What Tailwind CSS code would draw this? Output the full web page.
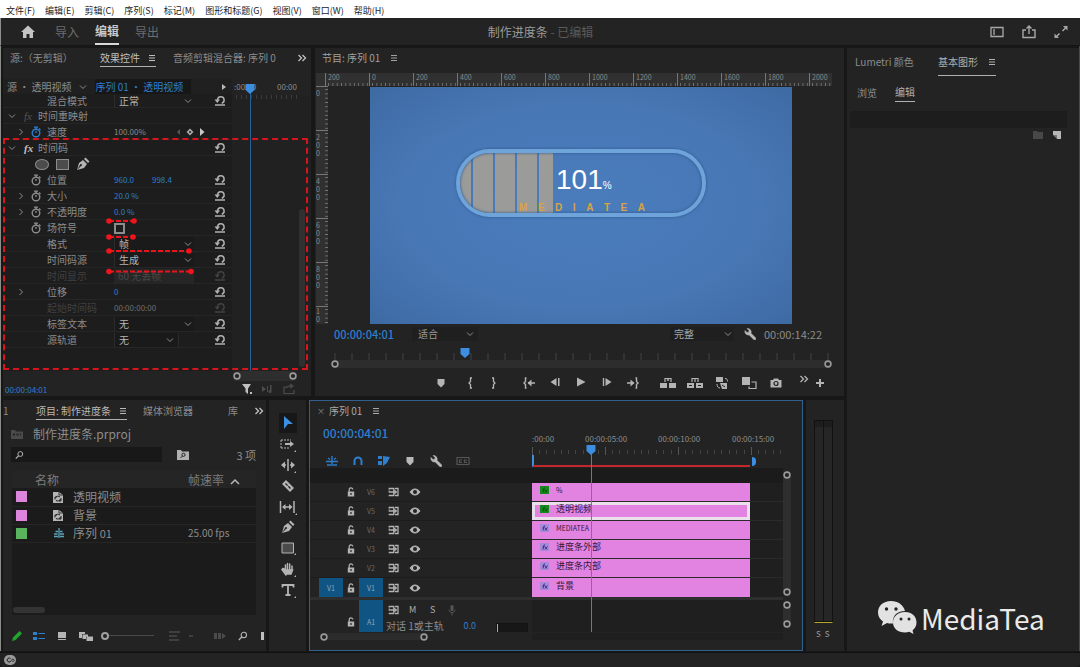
<!DOCTYPE html>
<html lang="zh-CN">
<head>
<meta charset="utf-8">
<meta name="viewport" content="width=device-width, initial-scale=1">
<title>制作进度条 - 已编辑</title>
<script src="https://cdn.jsdelivr.net/npm/@tailwindcss/browser@4"></script>
</head>
<body class="flex min-h-screen flex-col bg-[#171717] font-['Noto_Sans_CJK_SC','Noto_Sans',sans-serif] text-[10px] leading-4 text-[#8c8c8c]">

<!-- Icon library -->
<svg class="hidden" aria-hidden="true">
  <symbol id="i-menu" viewBox="0 0 8 8"><path d="M1 1.5h6M1 4h6M1 6.5h6" stroke="currentColor"/></symbol>
  <symbol id="i-more" viewBox="0 0 10 8"><path d="M1.5 1l3 3-3 3M5.500 1l3 3-3 3" fill="none" stroke="currentColor" stroke-width="1.300"/></symbol>
  <symbol id="i-down" viewBox="0 0 8 8"><path d="M1 2.500l3 3 3-3" fill="none" stroke="currentColor"/></symbol>
  <symbol id="i-right" viewBox="0 0 8 8"><path d="M2.500 1l3 3-3 3" fill="none" stroke="currentColor"/></symbol>
  <symbol id="i-watch" viewBox="0 0 12 12"><circle cx="6" cy="7" r="3.800" fill="none" stroke="currentColor" stroke-width="1.400"/><path d="M4 1.200h4M6 1v2M9 2.500l1.500 1.500M6 7V5" stroke="currentColor" stroke-width="1.300"/></symbol>
  <symbol id="i-reset" viewBox="0 0 12 12"><path d="M3.500 5.500V5a3.300 3.300 0 1 1 4.200 3.200M1 10h10" fill="none" stroke="currentColor" stroke-width="1.500"/><path d="M.500 4.500h5.500L3.200 8z" fill="currentColor"/></symbol>
  <symbol id="i-pen" viewBox="0 0 14 14"><path d="M1 13l2-7 4-3 4 4-3 4-7 2 4-4a1 1 0 1 0-1-1zM8 2l1.500-1.500 4 4L12 6z" fill="currentColor"/></symbol>
  <symbol id="i-wrench" viewBox="0 0 12 12"><path d="M1 2.500l2 2 1.700-.300.300-1.700-2-2a3.600 3.600 0 0 1 4 4.700l4.500 4.500a1 1 0 0 1-1.800 1.800L5.200 7A3.600 3.600 0 0 1 1 2.500z" fill="currentColor" stroke="currentColor" stroke-width=".500"/></symbol>
  <symbol id="i-shield" viewBox="0 0 10 10"><path d="M1.500 1h7v5L5 9.500 1.500 6z" fill="currentColor"/></symbol>
  <symbol id="i-find" viewBox="0 0 12 12"><circle cx="7" cy="4.700" r="3.200" fill="none" stroke="currentColor" stroke-width="1.300"/><path d="M4.700 7L1 10.800" stroke="currentColor" stroke-width="1.600"/></symbol>
  <symbol id="i-clip" viewBox="0 0 10 12"><path d="M0 1h6l4 3v8H0z" fill="currentColor"/><path d="M6 1v3h4" fill="none" stroke="#1b1b1b" stroke-width=".800"/><path d="M2.500 6.500A3 3 0 0 1 7 6M7.500 8a3 3 0 0 1-4.500 1.500M2 8.500V6h2M8 7v3H6" fill="none" stroke="#1b1b1b"/></symbol>
  <symbol id="i-lock" viewBox="0 0 8 10"><path d="M2.200 5V3a1.800 1.800 0 0 1 3.600-.500" fill="none" stroke="currentColor" stroke-width="1.200"/><path d="M.800 4.500h6.400v5H.800z" fill="currentColor"/><path d="M4 6v2" stroke="#232323" stroke-width="1.200"/></symbol>
  <symbol id="i-sync" viewBox="0 0 11 10"><path d="M.700 1.500H6M.700 8.500H6M.700 5H6M7 1.500h3v7H7M5.800 1v8" fill="none" stroke="currentColor" stroke-width="1.300"/><path d="M1.200 1v4M6.500 3l2.500 2-2.500 2z" fill="currentColor" stroke="currentColor" stroke-width=".600"/></symbol>
  <symbol id="i-eye" viewBox="0 0 12 10"><path d="M1 5c2.500-4 7.500-4 10 0-2.500 4-7.500 4-10 0z" fill="currentColor" stroke="currentColor"/><circle cx="6" cy="5" r="2" fill="#232323"/></symbol>
  <symbol id="i-knob" viewBox="0 0 8 8"><circle cx="4" cy="4" r="2.900" fill="#232323" stroke="#9a9a9a" stroke-width="1.600"/></symbol>
  <symbol id="i-nest" viewBox="0 0 12 12"><path d="M6 1v10M1 9.500h4M1 7h3.500M7 7h4M7 9.500h4M2.500 4.500H5M7 4.500h2.500" stroke="currentColor" stroke-width="1.300"/></symbol>
  <symbol id="i-head" viewBox="0 0 10 10"><path d="M.500 0h9v6L5 10 .500 6z" fill="#3b8ee0"/></symbol>
</svg>

<!-- Menu bar -->
<nav class="flex h-[18px] items-center gap-2.5 bg-white pl-1.5 pt-1 text-[9px] text-[#1c1c1c]">
  <button>文件(F)</button><button>编辑(E)</button><button>剪辑(C)</button><button>序列(S)</button><button>标记(M)</button><button>图形和标题(G)</button><button>视图(V)</button><button>窗口(W)</button><button>帮助(H)</button>
</nav>

<!-- Workspace header -->
<header class="grid h-7 shrink-0 grid-cols-3 items-center border-b border-l border-b-[#151515] border-l-[#8a8f8a] bg-[#232323] text-[12px]">
  <div class="flex h-full items-center gap-4 pl-5">
    <button aria-label="主页" class="text-[#c4c4c4]"><svg class="h-3.5 w-3.5" viewBox="0 0 14 14"><path d="M7 .500L14 7h-2v6H8.500V9h-3v4H2V7H0z" fill="currentColor"/></svg></button>
    <button class="ml-1 text-[#6e6e6e]">导入</button>
    <button class="h-full border-b-2 border-[#d8d8d8] font-bold text-[#c8c8c8]">编辑</button>
    <button class="text-[#6e6e6e]">导出</button>
  </div>
  <h1 class="text-center text-[#9a9a9a]">制作进度条 <span class="text-[#5a5a5a]">- 已编辑</span></h1>
  <div class="flex items-center justify-end gap-[18px] pr-3 text-[#a8a8a8]">
    <button aria-label="工作区"><svg class="h-3.5 w-3.5" viewBox="0 0 14 14"><path d="M1 2.500h12v9H1zM4 4v6" fill="none" stroke="currentColor" stroke-width="1.300"/></svg></button>
    <button aria-label="快速导出"><svg class="h-3.5 w-3.5" viewBox="0 0 14 14"><path d="M4 5H1v7.500h12V5h-3M7 9V1.500M4.500 3.500L7 1l2.500 2.500" fill="none" stroke="currentColor" stroke-width="1.400"/></svg></button>
    <button aria-label="全屏"><svg class="h-3.5 w-3.5" viewBox="0 0 14 14"><path d="M9 1h4.500v4.500zM.500 8.500V13H5z" fill="currentColor"/><path d="M12 2.500L8.500 6M2 12l3.500-3.500" stroke="currentColor" stroke-width="1.500"/></svg></button>
  </div>
</header>

<main class="flex flex-1 gap-[3px] border-l border-r border-l-[#8a8f8a] border-r-[#4a4a4a] pl-0.5 pt-0.5">
 <div class="flex min-w-0 flex-1 flex-col gap-1">
  <div class="flex gap-1">

  <!-- Effect controls -->
  <section class="relative flex w-[308px] shrink-0 flex-col bg-[#232323]">
    <div class="flex h-[31px] items-start gap-[17px] pl-[7px] pt-0.5">
      <button class="w-[73px] whitespace-nowrap text-left">源:（无剪辑）</button>
      <button class="flex h-[17px] items-center gap-2 whitespace-nowrap border-b border-[#b0b0b0] text-[#c0c0c0]">效果控件 <svg class="h-2 w-2"><use href="#i-menu"/></svg></button>
      <button class="whitespace-nowrap">音频剪辑混合器: 序列 0</button>
      <button aria-label="更多面板" class="ml-1 flex h-4 items-center text-[#c0c0c0]"><svg class="h-2 w-2.5"><use href="#i-more"/></svg></button>
    </div>
    <div class="flex">
      <div class="w-[229px] bg-[#1d1d1d] pb-[23px]">
        <div class="flex h-[15px] items-center gap-2 whitespace-nowrap bg-[#202020] pl-1">
          <span>源 · 透明视频</span><svg class="h-2 w-2"><use href="#i-down"/></svg>
          <a href="#seq" class="bg-[#171717] pr-2 leading-[15px] text-[#2d7fd0]">序列 01 · 透明视频</a>
          <svg class="ml-auto mr-1 h-2 w-2 text-[#b8b8b8]" viewBox="0 0 8 8"><path d="M2 1l4 3-4 3z" fill="currentColor"/></svg>
        </div>
        <div class="grid h-3.5 grid-cols-[44px_67px_1fr_24px] items-center border-b border-[#262626] leading-3">
          <label for="blend" class="col-start-2">混合模式</label>
          <span class="relative flex w-[80px] items-center border-l border-[#2c2c2c]"><select id="blend" class="h-3 w-full appearance-none bg-transparent pl-1 leading-3 text-[#b4b4b4]"><option>正常</option></select><svg class="pointer-events-none absolute right-0.5 h-2 w-2"><use href="#i-down"/></svg></span>
          <button aria-label="重置" class="justify-self-center text-[#b0b0b0]"><svg class="h-3 w-3"><use href="#i-reset"/></svg></button>
        </div>
        <div class="flex h-4 items-center border-b border-[#262626] pl-[5px]">
          <svg class="h-2 w-2"><use href="#i-down"/></svg><i class="ml-2 w-[14px] font-['Liberation_Serif',serif] text-[11px] text-[#555]">fx</i><span>时间重映射</span>
        </div>
        <div class="grid h-4 grid-cols-[27px_17px_67px_1fr_24px] items-center border-b border-[#262626]">
          <svg class="ml-3.5 h-2 w-2"><use href="#i-right"/></svg><svg class="h-3 w-3 text-[#2d7fd0]"><use href="#i-watch"/></svg><span>速度</span><span class="text-[8px]">100.00%</span>
          <svg class="-ml-8 h-2.5 w-8 text-[#a8a8a8]" viewBox="0 0 32 10"><path d="M4 2v6L1 5z" fill="#555"/><path d="M14 1.500L17.500 5 14 8.500 10.500 5z" fill="#a8a8a8"/><circle cx="14" cy="5" r="1" fill="#1d1d1d"/><path d="M24 1v8L28.500 5z" fill="#c8c8c8"/></svg>
        </div>
        <div class="flex h-4 items-center border-b border-[#262626] pl-[5px]">
          <svg class="h-2 w-2"><use href="#i-down"/></svg><i class="ml-2 w-[14px] font-['Liberation_Serif',serif] text-[11px] font-bold text-[#c0c0c0]">fx</i><span>时间码</span>
          <button aria-label="重置" class="ml-auto mr-1.5 text-[#b0b0b0]"><svg class="h-3 w-3"><use href="#i-reset"/></svg></button>
        </div>
        <div class="flex h-4 items-center gap-[7px] pl-8 text-[#b4b4b4]">
          <button aria-label="椭圆蒙版" class="h-[11px] w-3.5 rounded-[50%] border border-[#8c8c8c] bg-[#4c4c4c]"></button>
          <button aria-label="矩形蒙版" class="h-[11px] w-[13px] border border-[#8c8c8c] bg-[#4c4c4c]"></button>
          <button aria-label="钢笔蒙版"><svg class="h-3.5 w-3.5"><use href="#i-pen"/></svg></button>
        </div>
        <div class="grid h-4 grid-cols-[27px_17px_67px_1fr_24px] items-center border-b border-[#262626]">
          <span></span><svg class="h-3 w-3"><use href="#i-watch"/></svg><span>位置</span><span class="flex gap-[18px] text-[8px] text-[#2d7fd0]"><span>960.0</span><span>998.4</span></span>
          <button aria-label="重置" class="justify-self-center text-[#b0b0b0]"><svg class="h-3 w-3"><use href="#i-reset"/></svg></button>
        </div>
        <div class="grid h-4 grid-cols-[27px_17px_67px_1fr_24px] items-center border-b border-[#262626]">
          <svg class="ml-3.5 h-2 w-2"><use href="#i-right"/></svg><svg class="h-3 w-3"><use href="#i-watch"/></svg><span>大小</span><span class="text-[8px] text-[#2d7fd0]">20.0 %</span>
          <button aria-label="重置" class="justify-self-center text-[#b0b0b0]"><svg class="h-3 w-3"><use href="#i-reset"/></svg></button>
        </div>
        <div class="grid h-4 grid-cols-[27px_17px_67px_1fr_24px] items-center border-b border-[#262626]">
          <svg class="ml-3.5 h-2 w-2"><use href="#i-right"/></svg><svg class="h-3 w-3"><use href="#i-watch"/></svg><span>不透明度</span><span class="text-[8px] text-[#2d7fd0]">0.0 %</span>
          <button aria-label="重置" class="justify-self-center text-[#b0b0b0]"><svg class="h-3 w-3"><use href="#i-reset"/></svg></button>
        </div>
        <div class="grid h-4 grid-cols-[27px_17px_67px_1fr_24px] items-center border-b border-[#262626]">
          <span></span><svg class="h-3 w-3"><use href="#i-watch"/></svg><label for="field">场符号</label><input id="field" type="checkbox" class="h-[11px] w-[11px] appearance-none border-2 border-[#8c8c8c]">
          <button aria-label="重置" class="justify-self-center text-[#b0b0b0]"><svg class="h-3 w-3"><use href="#i-reset"/></svg></button>
        </div>
        <div class="grid h-4 grid-cols-[44px_67px_1fr_24px] items-center border-b border-[#262626]">
          <label for="format" class="col-start-2">格式</label>
          <span class="relative flex w-[80px] items-center border-l border-[#2c2c2c]"><select id="format" class="h-3.5 w-full appearance-none bg-[#1a1a1a] pl-1 leading-3 text-[#b4b4b4]"><option>帧</option></select><svg class="pointer-events-none absolute right-0.5 h-2 w-2"><use href="#i-down"/></svg></span>
          <button aria-label="重置" class="justify-self-center text-[#b0b0b0]"><svg class="h-3 w-3"><use href="#i-reset"/></svg></button>
        </div>
        <div class="grid h-4 grid-cols-[44px_67px_1fr_24px] items-center border-b border-[#262626]">
          <label for="source" class="col-start-2">时间码源</label>
          <span class="relative flex w-[80px] items-center border-l border-[#2c2c2c]"><select id="source" class="h-3.5 w-full appearance-none bg-[#1a1a1a] pl-1 leading-3 text-[#b4b4b4]"><option>生成</option></select><svg class="pointer-events-none absolute right-0.5 h-2 w-2"><use href="#i-down"/></svg></span>
          <button aria-label="重置" class="justify-self-center text-[#b0b0b0]"><svg class="h-3 w-3"><use href="#i-reset"/></svg></button>
        </div>
        <div class="grid h-4 grid-cols-[44px_67px_1fr_24px] items-center border-b border-[#262626] text-[#414141]">
          <label for="display" class="col-start-2">时间显示</label>
          <span class="relative flex w-[80px] items-center"><select id="display" disabled class="h-3.5 w-full appearance-none bg-[#262626] pl-1 leading-3 text-[#484848] opacity-100"><option>60 无丢帧</option></select></span>
          <button aria-label="重置" disabled class="justify-self-center"><svg class="h-3 w-3"><use href="#i-reset"/></svg></button>
        </div>
        <div class="grid h-4 grid-cols-[27px_17px_67px_1fr_24px] items-center border-b border-[#262626]">
          <svg class="ml-3.5 h-2 w-2"><use href="#i-right"/></svg><span class="col-start-3">位移</span><span class="text-[8px] text-[#2d7fd0]">0</span>
          <button aria-label="重置" class="justify-self-center text-[#b0b0b0]"><svg class="h-3 w-3"><use href="#i-reset"/></svg></button>
        </div>
        <div class="grid h-4 grid-cols-[44px_67px_1fr_24px] items-center border-b border-[#262626] text-[#414141]">
          <span class="col-start-2">起始时间码</span><span class="text-[8px] text-[#707070]">00:00:00:00</span>
          <button aria-label="重置" disabled class="justify-self-center"><svg class="h-3 w-3"><use href="#i-reset"/></svg></button>
        </div>
        <div class="grid h-4 grid-cols-[44px_67px_1fr_24px] items-center border-b border-[#262626]">
          <label for="tagtext" class="col-start-2">标签文本</label>
          <span class="relative flex w-[80px] items-center border-l border-[#2c2c2c]"><select id="tagtext" class="h-3.5 w-full appearance-none bg-[#1a1a1a] pl-1 leading-3 text-[#b4b4b4]"><option>无</option></select><svg class="pointer-events-none absolute right-0.5 h-2 w-2"><use href="#i-down"/></svg></span>
          <button aria-label="重置" class="justify-self-center text-[#b0b0b0]"><svg class="h-3 w-3"><use href="#i-reset"/></svg></button>
        </div>
        <div class="grid h-4 grid-cols-[44px_67px_1fr_24px] items-center border-b border-[#262626]">
          <label for="srctrack" class="col-start-2">源轨道</label>
          <span class="relative flex w-[65px] items-center border-x border-[#2c2c2c]"><select id="srctrack" class="h-3.5 w-full appearance-none bg-[#1a1a1a] pl-1 leading-3 text-[#b4b4b4]"><option>无</option></select><svg class="pointer-events-none absolute right-1 h-2 w-2"><use href="#i-down"/></svg></span>
          <button aria-label="重置" class="justify-self-center text-[#b0b0b0]"><svg class="h-3 w-3"><use href="#i-reset"/></svg></button>
        </div>
      </div>
      <!-- Keyframe area -->
      <div class="relative flex-1 bg-[#212121]">
        <div class="flex h-4 justify-between bg-[#232323] pl-0.5 pr-3.5 text-[8px]"><span>:00:00</span><span>00:00</span></div>
        <div class="ml-1 mr-2.5 h-1 bg-[linear-gradient(90deg,#3c3c3c_1px,transparent_1px)] bg-[length:5px_4px]"></div>
        <div class="absolute bottom-0 left-[18px] top-2 w-px bg-[#245f96]"></div>
        <svg class="absolute left-[13px] top-[5px] h-2.5 w-2.5"><use href="#i-head"/></svg>
        <div class="absolute bottom-1 right-1.5 top-[130px] w-1.5 rounded bg-[#303030]"></div>
      </div>
    </div>
    <div class="ml-auto mr-3.5 flex h-2.5 w-[64px] items-center justify-between rounded bg-[#2e2e2e]"><svg class="h-2 w-2"><use href="#i-knob"/></svg><svg class="h-2 w-2"><use href="#i-knob"/></svg></div>
    <div class="flex h-[15px] items-center pl-0.5 pr-4">
      <span class="mr-auto pt-0.5 text-[8px] text-[#2d7fd0]">00:00:04:01</span>
      <button aria-label="过滤属性" class="mr-2 text-[#c0c0c0]"><svg class="h-3 w-3" viewBox="0 0 12 12"><path d="M1 1h9L7 5.500V11L4.500 9V5.500zM9 9h2v2H9z" fill="currentColor"/></svg></button>
      <button aria-label="循环播放" class="mr-2.5 text-[#4c4c4c]"><svg class="h-3 w-3" viewBox="0 0 12 12"><path d="M1 3l4 3-4 3zM6 3h1v6H6zM9 2h1.500v6H9z" fill="currentColor"/><circle cx="9" cy="8.500" r="1.500" fill="currentColor"/></svg></button>
      <button aria-label="导出" class="text-[#4c4c4c]"><svg class="h-3 w-3" viewBox="0 0 12 12"><path d="M4 4H1v6.500h10V7M3 5c2-2.500 4-2.500 6-2M7 1l3 2-3 2" fill="none" stroke="currentColor" stroke-width="1.200"/></svg></button>
    </div>
    <!-- Tutorial callouts -->
    <div class="pointer-events-none absolute left-0 top-[90px] h-[232px] w-[305px] border-2 border-dashed border-[#d8141c]"></div>
    <svg class="pointer-events-none absolute left-[102px] top-[168px] h-[62px] w-[92px]" viewBox="0 0 92 62">
      <g stroke="#e8141c" stroke-width="1.800" stroke-dasharray="5 2"><path d="M4 5h26M4 21h26M4 35h80M4 55.500h82"/></g>
      <g fill="#f0141c"><circle cx="4" cy="5" r="2.800"/><circle cx="29" cy="5" r="2.800"/><circle cx="4" cy="21" r="2.800"/><circle cx="28" cy="21" r="2.800"/><circle cx="4" cy="35" r="2.800"/><circle cx="84" cy="35" r="2.800"/><circle cx="4" cy="55.500" r="2.800"/><circle cx="86" cy="55.500" r="2.800"/></g>
    </svg>
  </section>

  <!-- Program monitor -->
  <section class="flex min-w-0 flex-1 flex-col bg-[#232323]">
    <div class="flex h-[25px] items-start pl-[7px] pt-0.5"><button class="flex items-center gap-2.5 text-[#a0a0a0]">节目: 序列 01 <svg class="h-2 w-2"><use href="#i-menu"/></svg></button></div>
    <div class="ml-px mr-3 flex h-[13px] overflow-hidden bg-[#303030] pl-[9px] text-[7px] leading-[9px] text-[#8a8a8a]">
      <span class="w-[44px] shrink-0 border-l border-[#777] bg-[linear-gradient(90deg,#777_1px,transparent_1px)] bg-[length:10%_3px] bg-bottom bg-repeat-x pl-0.5">200</span>
      <span class="w-[44px] shrink-0 border-l border-[#777] bg-[linear-gradient(90deg,#777_1px,transparent_1px)] bg-[length:10%_3px] bg-bottom bg-repeat-x pl-0.5">0</span>
      <span class="w-[44px] shrink-0 border-l border-[#777] bg-[linear-gradient(90deg,#777_1px,transparent_1px)] bg-[length:10%_3px] bg-bottom bg-repeat-x pl-0.5">200</span>
      <span class="w-[44px] shrink-0 border-l border-[#777] bg-[linear-gradient(90deg,#777_1px,transparent_1px)] bg-[length:10%_3px] bg-bottom bg-repeat-x pl-0.5">400</span>
      <span class="w-[44px] shrink-0 border-l border-[#777] bg-[linear-gradient(90deg,#777_1px,transparent_1px)] bg-[length:10%_3px] bg-bottom bg-repeat-x pl-0.5">600</span>
      <span class="w-[44px] shrink-0 border-l border-[#777] bg-[linear-gradient(90deg,#777_1px,transparent_1px)] bg-[length:10%_3px] bg-bottom bg-repeat-x pl-0.5">800</span>
      <span class="w-[44px] shrink-0 border-l border-[#777] bg-[linear-gradient(90deg,#777_1px,transparent_1px)] bg-[length:10%_3px] bg-bottom bg-repeat-x pl-0.5">1000</span>
      <span class="w-[44px] shrink-0 border-l border-[#777] bg-[linear-gradient(90deg,#777_1px,transparent_1px)] bg-[length:10%_3px] bg-bottom bg-repeat-x pl-0.5">1200</span>
      <span class="w-[44px] shrink-0 border-l border-[#777] bg-[linear-gradient(90deg,#777_1px,transparent_1px)] bg-[length:10%_3px] bg-bottom bg-repeat-x pl-0.5">1400</span>
      <span class="w-[44px] shrink-0 border-l border-[#777] bg-[linear-gradient(90deg,#777_1px,transparent_1px)] bg-[length:10%_3px] bg-bottom bg-repeat-x pl-0.5">1600</span>
      <span class="w-[44px] shrink-0 border-l border-[#777] bg-[linear-gradient(90deg,#777_1px,transparent_1px)] bg-[length:10%_3px] bg-bottom bg-repeat-x pl-0.5">1800</span>
      <span class="w-[44px] shrink-0 border-l border-[#777] bg-[linear-gradient(90deg,#777_1px,transparent_1px)] bg-[length:10%_3px] bg-bottom bg-repeat-x pl-0.5">2000</span>
    </div>
    <div class="ml-px flex h-[238px] overflow-hidden">
      <div class="flex w-3 shrink-0 flex-col overflow-hidden bg-[#303030] text-center text-[7px] leading-[8px] text-[#8a8a8a]">
        <span class="h-[44px] shrink-0 border-t border-[#777] bg-[linear-gradient(#777_1px,transparent_1px)] bg-[length:3px_10%] bg-right bg-repeat-y pr-2 pt-0.5">0</span>
        <span class="h-[44px] shrink-0 border-t border-[#777] bg-[linear-gradient(#777_1px,transparent_1px)] bg-[length:3px_10%] bg-right bg-repeat-y pr-2 pt-0.5">2<br>0<br>0</span>
        <span class="h-[44px] shrink-0 border-t border-[#777] bg-[linear-gradient(#777_1px,transparent_1px)] bg-[length:3px_10%] bg-right bg-repeat-y pr-2 pt-0.5">4<br>0<br>0</span>
        <span class="h-[44px] shrink-0 border-t border-[#777] bg-[linear-gradient(#777_1px,transparent_1px)] bg-[length:3px_10%] bg-right bg-repeat-y pr-2 pt-0.5">6<br>0<br>0</span>
        <span class="h-[44px] shrink-0 border-t border-[#777] bg-[linear-gradient(#777_1px,transparent_1px)] bg-[length:3px_10%] bg-right bg-repeat-y pr-2 pt-0.5">8<br>0<br>0</span>
        <span class="h-[44px] shrink-0 border-t border-[#777] bg-[linear-gradient(#777_1px,transparent_1px)] bg-[length:3px_10%] bg-right bg-repeat-y pr-2">1<br>0</span>
      </div>
      <div class="ml-[42px] mr-[52px] mt-px flex flex-1 justify-center bg-[radial-gradient(ellipse_at_center,#4a7cbc_0%,#4877b5_60%,#3e6aa3_100%)] pt-[62px]">
        <div class="relative h-[68px] w-[250px] rounded-full border-4 border-[#6ea4da] shadow-[0_0_3px_#2b5588]">
          <div class="absolute inset-0 overflow-hidden rounded-full">
            <div class="flex h-full w-[93px] gap-0.5">
              <span class="w-[11px] bg-[#9b9b99]"></span><span class="w-5 bg-[#9b9b99]"></span><span class="w-5 bg-[#9b9b99]"></span><span class="w-5 bg-[#9b9b99]"></span><span class="flex-1 bg-[#9b9b99]"></span>
            </div>
          </div>
          <div class="absolute inset-0 rounded-full shadow-[inset_0_0_3px_#2b5588]"></div>
          <div class="relative flex items-baseline pl-[96px] pt-[11px] font-['Liberation_Sans',sans-serif] text-[28px] leading-8 text-white">101<span class="text-[10px]">%</span></div>
          <div class="relative ml-[59px] flex w-[126px] justify-between font-['Liberation_Sans',sans-serif] text-[10px] font-bold leading-3 text-[#d9a441]"><span>M</span><span>E</span><span>D</span><span>I</span><span>A</span><span>T</span><span>E</span><span>A</span></div>
        </div>
      </div>
    </div>
    <div class="flex h-5 items-center pl-[19px] pr-[22px] text-[11px]">
      <span class="font-medium text-[#2d7fd0]">00:00:04:01</span>
      <span class="relative ml-[18px] flex w-[66px] items-center"><select aria-label="缩放级别" class="h-3.5 w-full appearance-none bg-[#1f1f1f] pl-1.5 text-[10px] leading-3 text-[#9a9a9a]"><option>适合</option></select><svg class="pointer-events-none absolute right-1 h-2 w-2"><use href="#i-down"/></svg></span>
      <span class="relative ml-auto flex w-[64px] items-center"><select aria-label="回放分辨率" class="h-3.5 w-full appearance-none bg-[#1f1f1f] pl-1 text-[10px] leading-3 text-[#a8a8a8]"><option>完整</option></select><svg class="pointer-events-none absolute right-0.5 h-2 w-2"><use href="#i-down"/></svg></span>
      <button aria-label="设置" class="ml-2.5 mr-2 text-[#b8b8b8]"><svg class="h-3 w-3"><use href="#i-wrench"/></svg></button>
      <span>00:00:14:22</span>
    </div>
    <div class="relative ml-[15px] mr-3 mt-1 h-3 bg-[linear-gradient(90deg,#404040_1px,transparent_1px)] bg-[length:17px_7px] bg-bottom bg-repeat-x">
      <svg class="absolute left-[130px] top-0 h-2.5 w-2.5"><use href="#i-head"/></svg>
    </div>
    <div class="ml-4 mr-3 flex h-2 items-center justify-between rounded bg-[#2d2d2d]"><svg class="h-2 w-2"><use href="#i-knob"/></svg><svg class="h-2 w-2"><use href="#i-knob"/></svg></div>
    <div class="mb-1 ml-[113px] mt-1.5 flex h-[18px] items-center text-[#b4b4b4]">
      <button aria-label="添加标记" class="flex w-[26px] justify-center"><svg class="h-2.5 w-2.5"><use href="#i-shield"/></svg></button>
      <div class="ml-1 flex">
        <button aria-label="标记入点" class="flex w-6 justify-center"><svg class="h-3 w-2" viewBox="0 0 8 12"><path d="M6 1H4.500v3.500L3 6l1.500 1.500V11H6" fill="none" stroke="currentColor" stroke-width="1.300"/></svg></button>
        <button aria-label="标记出点" class="flex w-6 justify-center"><svg class="h-3 w-2" viewBox="0 0 8 12"><path d="M2 1h1.500v3.500L5 6 3.500 7.500V11H2" fill="none" stroke="currentColor" stroke-width="1.300"/></svg></button>
      </div>
      <div class="ml-2.5 flex">
        <button aria-label="转到入点" class="flex w-[26px] justify-center"><svg class="h-3 w-3" viewBox="0 0 12 12"><path d="M3.500 1H2.500v3.500L1 6l1.500 1.500V11h1M5 6h7" fill="none" stroke="currentColor" stroke-width="1.400"/><path d="M8.500 2.500v7L4.500 6z" fill="currentColor"/></svg></button>
        <button aria-label="后退一帧" class="flex w-[26px] justify-center"><svg class="h-2.5 w-2.5" viewBox="0 0 10 10"><path d="M6.500 1v8L.500 5zM8 1h1.500v8H8z" fill="currentColor"/></svg></button>
        <button aria-label="播放" class="flex w-[26px] justify-center"><svg class="h-2.5 w-2.5" viewBox="0 0 10 10"><path d="M1 .500L9.500 5 1 9.500z" fill="currentColor"/></svg></button>
        <button aria-label="前进一帧" class="flex w-[26px] justify-center"><svg class="h-2.5 w-2.5" viewBox="0 0 10 10"><path d="M3.500 1v8l6-4zM.800 1h1.400v8H.800z" fill="currentColor"/></svg></button>
        <button aria-label="转到出点" class="flex w-[26px] justify-center"><svg class="h-3 w-3" viewBox="0 0 12 12"><path d="M8.500 1h1v3.500L11 6 9.500 7.500V11h-1M0 6h7" fill="none" stroke="currentColor" stroke-width="1.400"/><path d="M3.500 2.500v7l4-3.500z" fill="currentColor"/></svg></button>
      </div>
      <div class="ml-2 flex">
        <button aria-label="提升" class="flex w-[27px] justify-center"><svg class="h-3 w-4" viewBox="0 0 16 12"><path d="M0 6h7v5H0zM9 6h7v5H9z" fill="currentColor"/><path d="M5 5V1.500h6V5M7 3.500l1-1 1 1" fill="none" stroke="currentColor" stroke-width="1.200"/></svg></button>
        <button aria-label="提取" class="flex w-[27px] justify-center"><svg class="h-3 w-4" viewBox="0 0 16 12"><path d="M0 6h7v5H0zM9 6h7v5H9z" fill="currentColor"/><path d="M5 5V1.500h6V5M8 2v3" fill="none" stroke="currentColor" stroke-width="1.200"/><path d="M2 8.500h3M11 8.500h3" stroke="#232323"/></svg></button>
        <button aria-label="插入" class="flex w-[27px] justify-center"><svg class="h-3 w-3" viewBox="0 0 12 12"><path d="M0 0h7v5H0zM4 6h7v6H6z" fill="currentColor"/><path d="M9 1.500c2 0 2.500 1 2.500 3M1 7c0 2.500 1 4 3 4" fill="none" stroke="currentColor"/><path d="M6 8l3 2" stroke="#232323"/></svg></button>
        <button aria-label="比较视图" class="flex w-[27px] justify-center"><svg class="h-3 w-4" viewBox="0 0 16 12"><path d="M1 0h8v8H1z" fill="currentColor"/><path d="M10.500 5H15v6.500H8V9.500" fill="none" stroke="currentColor" stroke-width="1.200"/></svg></button>
        <button aria-label="导出帧" class="flex w-[27px] justify-center"><svg class="h-3 w-3" viewBox="0 0 12 12"><path d="M.500 3H3l1-1.500h4L9 3h2.500v7.500H.500z" fill="currentColor"/><circle cx="6" cy="6.500" r="2" fill="none" stroke="#232323" stroke-width="1.200"/></svg></button>
      </div>
      <button aria-label="更多按钮" class="mb-2 ml-2 flex w-[14px] justify-center"><svg class="h-2 w-2.5"><use href="#i-more"/></svg></button>
      <button aria-label="按钮编辑器" class="flex w-[18px] justify-center"><svg class="h-2.5 w-2.5" viewBox="0 0 10 10"><path d="M5 1v8M1 5h8" stroke="currentColor" stroke-width="2"/></svg></button>
    </div>
  </section>
  </div>

  <div class="flex flex-1 gap-[3px]">
  <!-- Project panel -->
  <section class="flex w-[263px] shrink-0 flex-col bg-[#232323]">
    <div class="flex h-[25px] items-start pt-[3px]">
      <span class="w-[33px]">1</span>
      <button class="flex h-[17px] items-center gap-2 whitespace-nowrap border-b border-[#b0b0b0] text-[#b8b8b8]">项目: 制作进度条 <svg class="h-2 w-2"><use href="#i-menu"/></svg></button>
      <button class="ml-4 whitespace-nowrap">媒体浏览器</button>
      <button class="ml-auto">库</button>
      <button aria-label="更多面板" class="ml-4 mr-0.5 flex h-4 items-center text-[#c0c0c0]"><svg class="h-2 w-2.5"><use href="#i-more"/></svg></button>
    </div>
    <div class="flex h-[17px] items-center gap-2.5 pl-2 text-[12px]">
      <svg class="h-2.5 w-3 text-[#4a4a4a]" viewBox="0 0 12 10"><path d="M0 1h4l1 1.500h7V10H0z" fill="currentColor"/><path d="M2 5.500h2M5.500 5.500h2M9 5.500h1" stroke="#232323" stroke-width="2"/></svg><span>制作进度条.prproj</span>
    </div>
    <div class="flex h-[25px] items-center pl-2 pr-2.5">
      <label class="flex h-[15px] w-[151px] items-center gap-1 bg-[#181818] pl-1 text-[#b0b0b0]"><svg class="h-2.5 w-2.5"><use href="#i-find"/></svg><input type="search" aria-label="搜索" class="h-full w-full bg-transparent outline-none"></label>
      <button aria-label="新建搜索素材箱" class="ml-[15px] text-[#b0b0b0]"><svg class="h-2.5 w-3" viewBox="0 0 12 10"><path d="M0 0h4l1 1.500h7V10H0z" fill="currentColor"/><circle cx="6.500" cy="4.800" r="1.600" fill="none" stroke="#232323"/><path d="M5.500 6L3.500 8" stroke="#232323"/></svg></button>
      <span class="ml-auto text-[11px]">3 项</span>
    </div>
    <div class="ml-[9px] mr-2.5 mt-1 flex h-[144px] flex-col bg-[#1b1b1b]">
      <table class="w-full table-fixed text-[12px]">
        <thead><tr class="h-[17px] bg-[#252525] text-left text-[#7c7c7c]"><th class="w-[23px]" aria-label="标签"></th><th class="font-normal">名称</th><th class="w-[68px] font-normal"><button class="flex items-center gap-1.5 whitespace-nowrap">帧速率 <svg class="mt-1 h-2 w-2.5 text-[#b8b8b8]" viewBox="0 0 10 8"><path d="M1 6l4-4 4 4" fill="none" stroke="currentColor" stroke-width="1.500"/></svg></button></th></tr></thead>
        <tbody>
          <tr class="h-[18px] border-b border-[#252525]"><td><span class="ml-1 block h-[11px] w-[11px] bg-[#dd85dd]"></span></td><td><span class="flex items-center gap-2.5 pl-[18px]"><svg class="h-3 w-2.5 text-[#b4b4b4]"><use href="#i-clip"/></svg>透明视频</span></td><td></td></tr>
          <tr class="h-[18px] border-b border-[#252525]"><td><span class="ml-1 block h-[11px] w-[11px] bg-[#dd85dd]"></span></td><td><span class="flex items-center gap-2.5 pl-[18px]"><svg class="h-3 w-2.5 text-[#b4b4b4]"><use href="#i-clip"/></svg>背景</span></td><td></td></tr>
          <tr class="h-[18px] border-b border-[#252525]"><td><span class="ml-1 block h-[11px] w-[11px] bg-[#5ab45e]"></span></td><td><span class="flex items-center gap-2 pl-[18px]"><svg class="h-3 w-3 text-[#5aa5b8]"><use href="#i-nest"/></svg><span>序列 <span class="text-[11px]">01</span></span></span></td><td class="whitespace-nowrap text-[10px]">25.00 fps</td></tr>
        </tbody>
      </table>
      <div class="mb-0.5 ml-px mt-auto h-1.5 w-8 rounded bg-[#333]"></div>
    </div>
    <div class="mt-auto flex h-[31px] items-center overflow-hidden pl-2 text-[#b4b4b4]">
      <button aria-label="可写" class="mr-2.5"><svg class="h-3 w-3" viewBox="0 0 12 12"><path d="M1 11l1-3.500L8.500 1 11 3.500 4.500 10z" fill="#22a52c"/></svg></button>
      <button aria-label="列表视图" class="mr-3"><svg class="h-2.5 w-3" viewBox="0 0 12 10"><path d="M0 1h4v3H0zM0 6h4v3H0z" fill="#2d7fd0"/><path d="M5.500 2.500H12M5.500 7.500H12" stroke="#2d7fd0"/></svg></button>
      <button aria-label="图标视图" class="mr-3"><svg class="h-2.5 w-2.5" viewBox="0 0 10 10"><path d="M1 1h8v6H1z" fill="currentColor"/><path d="M1 8.500h8" stroke="currentColor"/></svg></button>
      <button aria-label="自由变换视图" class="mr-2"><svg class="h-2.5 w-3.5" viewBox="0 0 14 10"><path d="M0 1h6v2H3v4H0zM3.500 3.500H9v2H7V8H3.500zM7.500 5.500H14V10H7.500z" fill="currentColor"/></svg></button>
      <span class="relative flex h-2 w-[53px] items-center"><input type="range" value="0" aria-label="缩放" class="h-px w-full appearance-none bg-[#4a4a4a] opacity-100 [&::-webkit-slider-thumb]:h-2 [&::-webkit-slider-thumb]:w-2 [&::-webkit-slider-thumb]:appearance-none [&::-webkit-slider-thumb]:rounded-full [&::-webkit-slider-thumb]:border-2 [&::-webkit-slider-thumb]:border-[#a0a0a0] [&::-webkit-slider-thumb]:bg-[#232323]"></span>
      <button aria-label="排序" class="ml-3.5 text-[#4a4a4a]"><svg class="h-2.5 w-7" viewBox="0 0 28 10"><path d="M1 1h11M1 5h8M1 9h10M21 5h4" stroke="currentColor" stroke-width="1.300"/></svg></button>
      <button aria-label="自动匹配序列" class="ml-[18px] text-[#4a4a4a]"><svg class="h-2 w-3" viewBox="0 0 12 8"><path d="M0 1h3v6H0zM4 1h3v6H4zM8 1l4 3-4 3z" fill="currentColor"/></svg></button>
      <button aria-label="查找" class="ml-3"><svg class="h-2.5 w-2.5"><use href="#i-find"/></svg></button>
      <button aria-label="新建素材箱" class="ml-auto mr-0.5 h-2 w-[3px] bg-[#c0c0c0]"></button>
    </div>
  </section>

  <!-- Tools -->
  <section class="w-[37px] shrink-0 bg-[#232323] pt-[13px] text-[#b4b4b4]">
    <div class="flex h-[187px] flex-col items-center justify-between">
      <button aria-label="选择工具" class="grid h-5 w-[18px] place-items-center bg-[#171717]"><svg class="h-3.5 w-2.5" viewBox="0 0 10 14"><path d="M1 0l9 8H5l-4 5z" fill="#3b8ee0"/></svg></button>
      <button aria-label="轨道选择" class="grid h-5 place-items-center"><svg class="h-4 w-4" viewBox="0 0 16 16"><path d="M1 4h10M1 12h9M1 4v8" fill="none" stroke="currentColor" stroke-dasharray="2 1"/><path d="M5 8h6" stroke="currentColor" stroke-width="2"/><path d="M10 5l4 3-4 3zM16 14v2h-2z" fill="currentColor"/></svg></button>
      <button aria-label="波纹编辑" class="grid h-5 place-items-center"><svg class="h-4 w-4" viewBox="0 0 16 16"><path d="M8 2v12M3 8h3M10 8h3" stroke="currentColor" stroke-width="1.500"/><path d="M5 4.500v7L1 8zM11 4.500v7L15 8zM16 14v2h-2z" fill="currentColor"/></svg></button>
      <button aria-label="剃刀" class="grid h-5 place-items-center"><svg class="h-3.5 w-3.5" viewBox="0 0 14 14"><path d="M1 5l4-4 8 8-4 4z" fill="currentColor"/><path d="M4.500 4.500l5 5" stroke="#232323" stroke-width="1.300" stroke-dasharray="3 1"/></svg></button>
      <button aria-label="外滑" class="grid h-5 place-items-center"><svg class="h-4 w-[18px]" viewBox="0 0 18 16"><path d="M1.500 2v12M15 2v12M4 8h8.500" stroke="currentColor" stroke-width="1.500"/><path d="M6.500 5v6L3 8zM10 5v6l3.500-3zM18 14v2h-2z" fill="currentColor"/></svg></button>
      <button aria-label="钢笔" class="grid h-5 place-items-center"><svg class="h-3.5 w-3.5"><use href="#i-pen"/></svg></button>
      <button aria-label="矩形" class="grid h-5 place-items-center"><svg class="h-3.5 w-4" viewBox="0 0 16 14"><path d="M2 2h11.500v10H2z" fill="#4a4a4a" stroke="currentColor"/><path d="M16 12v2h-2z" fill="currentColor"/></svg></button>
      <button aria-label="手形" class="grid h-5 place-items-center"><svg class="h-4 w-4" viewBox="0 0 16 16"><path d="M6 14L2 8.500l1-1L5.500 9V4M7.500 8V2.500M9.700 8V3M12 8.500V5M6 9v4h5l1.500-4z" fill="currentColor" stroke="currentColor" stroke-width="1.500" stroke-linecap="round"/><path d="M16 14v2h-2z" fill="currentColor"/></svg></button>
      <button aria-label="文字" class="grid h-5 place-items-center"><svg class="h-4 w-4" viewBox="0 0 16 16"><path d="M2.500 5.500V3h11v2.500M8 3v10M5.500 13h5" fill="none" stroke="currentColor" stroke-width="1.800"/><path d="M16 14v2h-2z" fill="currentColor"/></svg></button>
    </div>
  </section>

  <!-- Timeline -->
  <section id="seq" class="min-w-0 flex-1 border border-[#31608f] bg-[#232323]">
    <div class="grid grid-cols-[222px_1fr_19px]">
      <!-- Track headers -->
      <div>
        <div class="flex h-5 items-center gap-2 pl-[7px]"><button aria-label="关闭" class="w-1 text-[8px] leading-3">×</button><button class="flex items-center gap-2.5 text-[#a8a8a8]">序列 01 <svg class="h-2 w-2"><use href="#i-menu"/></svg></button></div>
        <div class="h-[33px] pl-[13px] pt-1 text-[12px] font-medium text-[#2d7fd0]">00:00:04:01</div>
        <div class="flex h-3.5 items-center gap-3.5 pl-4 text-[#2d7fd0]">
          <button aria-label="嵌套"><svg class="h-3 w-3" viewBox="0 0 12 12"><path d="M6 1v10M1 10h4M0 6.500h12M7 10h4M2 3l2 1.500M10 3L8 4.500" stroke="currentColor" stroke-width="1.400"/></svg></button>
          <button aria-label="对齐"><svg class="h-3 w-3" viewBox="0 0 12 12"><path d="M2.500 10V6a3.500 3.500 0 0 1 7 0v4" fill="none" stroke="currentColor" stroke-width="2"/></svg></button>
          <button aria-label="链接选择"><svg class="h-3 w-3" viewBox="0 0 12 12"><path d="M0 1h4v3H0zM0 6h4v4H0zM5 1l7 1-3 6-4 3z" fill="currentColor"/></svg></button>
          <button aria-label="添加标记" class="text-[#b8b8b8]"><svg class="h-2.5 w-3"><use href="#i-shield"/></svg></button>
          <button aria-label="时间轴设置" class="text-[#b8b8b8]"><svg class="h-3 w-3"><use href="#i-wrench"/></svg></button>
          <button aria-label="字幕轨道" class="text-[#555]"><svg class="h-3 w-3.5" viewBox="0 0 14 12"><path d="M1 2.500h12v7H1zM6 5H3.500v2.500H6M11 5H8.500v2.500H11" fill="none" stroke="currentColor" stroke-width="1.200"/></svg></button>
        </div>
        <div class="h-[15px] bg-[#1b1b1b]"></div>
        <div class="text-[7px] text-[#6a6a6a]">
          <div class="grid h-[19px] grid-cols-[24px_16px_24px_20px_24px] items-center justify-items-center border-b border-[#1c1c1c] pl-[9px]"><span></span><svg class="h-2.5 w-2 text-[#b4b4b4]"><use href="#i-lock"/></svg><span>V6</span><svg class="h-2.5 w-[11px] text-[#b4b4b4]"><use href="#i-sync"/></svg><svg class="h-2.5 w-3 text-[#b4b4b4]"><use href="#i-eye"/></svg></div>
          <div class="grid h-[19px] grid-cols-[24px_16px_24px_20px_24px] items-center justify-items-center border-b border-[#1c1c1c] pl-[9px]"><span></span><svg class="h-2.5 w-2 text-[#b4b4b4]"><use href="#i-lock"/></svg><span>V5</span><svg class="h-2.5 w-[11px] text-[#b4b4b4]"><use href="#i-sync"/></svg><svg class="h-2.5 w-3 text-[#b4b4b4]"><use href="#i-eye"/></svg></div>
          <div class="grid h-[19px] grid-cols-[24px_16px_24px_20px_24px] items-center justify-items-center border-b border-[#1c1c1c] pl-[9px]"><span></span><svg class="h-2.5 w-2 text-[#b4b4b4]"><use href="#i-lock"/></svg><span>V4</span><svg class="h-2.5 w-[11px] text-[#b4b4b4]"><use href="#i-sync"/></svg><svg class="h-2.5 w-3 text-[#b4b4b4]"><use href="#i-eye"/></svg></div>
          <div class="grid h-[19px] grid-cols-[24px_16px_24px_20px_24px] items-center justify-items-center border-b border-[#1c1c1c] pl-[9px]"><span></span><svg class="h-2.5 w-2 text-[#b4b4b4]"><use href="#i-lock"/></svg><span>V3</span><svg class="h-2.5 w-[11px] text-[#b4b4b4]"><use href="#i-sync"/></svg><svg class="h-2.5 w-3 text-[#b4b4b4]"><use href="#i-eye"/></svg></div>
          <div class="grid h-[19px] grid-cols-[24px_16px_24px_20px_24px] items-center justify-items-center border-b border-[#1c1c1c] pl-[9px]"><span></span><svg class="h-2.5 w-2 text-[#b4b4b4]"><use href="#i-lock"/></svg><span>V2</span><svg class="h-2.5 w-[11px] text-[#b4b4b4]"><use href="#i-sync"/></svg><svg class="h-2.5 w-3 text-[#b4b4b4]"><use href="#i-eye"/></svg></div>
          <div class="grid h-[19px] grid-cols-[24px_16px_24px_20px_24px] items-center justify-items-center pl-[9px]"><button class="h-full w-full bg-[#0f5482] text-[#8da9bc]">V1</button><svg class="h-2.5 w-2 text-[#b4b4b4]"><use href="#i-lock"/></svg><button class="h-full w-full bg-[#0f5482] text-[#8da9bc]">V1</button><svg class="h-2.5 w-[11px] text-[#b4b4b4]"><use href="#i-sync"/></svg><svg class="h-2.5 w-3 text-[#b4b4b4]"><use href="#i-eye"/></svg></div>
        </div>
        <div class="h-[3px] bg-[#2e2e2e]"></div>
        <div class="flex h-8 overflow-hidden pl-[33px]">
          <svg class="mt-[17px] h-2.5 w-4 text-[#b4b4b4]"><use href="#i-lock"/></svg>
          <button class="h-full w-6 bg-[#0f5482] pt-3 text-[7px] text-[#8da9bc]">A1</button>
          <div class="flex-1">
            <div class="flex h-5 items-center pl-[5px] text-[9px] text-[#b0b0b0]"><svg class="h-2.5 w-[11px]"><use href="#i-sync"/></svg><button class="ml-2.5 w-[21px] text-left">M</button><button class="w-[18px] text-left">S</button><svg class="h-3 w-2 text-[#555]" viewBox="0 0 8 12"><rect x="2.500" y="1" width="3" height="6" rx="1.500" fill="currentColor"/><path d="M1 5.500c0 4 6 4 6 0M4 9v2.500" fill="none" stroke="currentColor"/></svg></div>
            <div class="flex h-3 items-center whitespace-nowrap pl-[3px] text-[9px] leading-3"><span class="text-[10px]">对话 1或主轨</span><span class="ml-auto text-[#2d7fd0]">0.0</span><span class="ml-5 mr-1 mt-1 flex h-2.5 w-8 border border-[#141414] bg-[#171717]"><span class="w-px bg-[#c8b52c]"></span></span></div>
          </div>
        </div>
        <div class="ml-2.5 mt-px flex h-[7px] w-[108px] items-center justify-between rounded bg-[#2c2c2c]"><svg class="h-2 w-2"><use href="#i-knob"/></svg><svg class="h-2 w-2"><use href="#i-knob"/></svg></div>
      </div>

      <!-- Ruler and clips -->
      <div class="relative flex flex-col">
        <div class="flex h-[67px] flex-col pt-[30px]">
          <div class="flex h-4 items-center overflow-hidden whitespace-nowrap text-[8px]"><span class="w-[53px] shrink-0">:00:00</span><span class="w-[73px] shrink-0">00:00:05:00</span><span class="w-[74px] shrink-0">00:00:10:00</span><span class="shrink-0">00:00:15:00</span></div>
          <svg class="h-2 w-full" aria-hidden="true"><defs><pattern id="ticks" width="73" height="8" patternUnits="userSpaceOnUse"><path d="M.500 0v8" stroke="#555"/><path d="M7.500 3v4M14.500 3v4M22.500 3v4M29.500 3v4M36.500 3v4M43.500 3v4M51.500 3v4M58.500 3v4M66.500 3v4" stroke="#444"/></pattern></defs><rect width="100%" height="8" fill="url(#ticks)"/></svg>
          <div class="flex h-3 items-center"><span class="h-full w-[218px] border-b-2 border-l-2 border-b-[#c2272d] border-l-[#3b8ee0]"></span><span class="ml-0.5 h-[9px] w-1 rounded-r-full bg-[#3b8ee0]"></span></div>
        </div>
        <div class="h-[15px] bg-[#1b1b1b]"></div>
        <div class="bg-[#1f1f1f] text-[9px] text-[#33163a]">
          <div class="h-[19px] border-b border-[#2a2a2a]"><div class="flex h-[18px] w-[218px] items-center gap-1.5 bg-[#e283e2] pb-1 pl-2"><svg class="h-2 w-2.5" viewBox="0 0 10 8"><path d="M0 0h9v8H0z" fill="#158a1c"/><path d="M3 6.500l1-4.500h1M2.500 4h2M5 6.500l2.500-3M5 3.500l2 3" stroke="#0a4410" fill="none" stroke-width=".800"/></svg><span class="text-[7px]">%</span></div></div>
          <div class="h-[19px] border-b border-[#2a2a2a]"><div class="flex h-[18px] w-[218px] items-center gap-1.5 border-[3px] border-[#eadfea] bg-[#e283e2] pb-1 pl-[5px]"><svg class="h-2 w-2.5" viewBox="0 0 10 8"><path d="M0 0h9v8H0z" fill="#158a1c"/><path d="M3 6.500l1-4.500h1M2.500 4h2M5 6.500l2.500-3M5 3.500l2 3" stroke="#0a4410" fill="none" stroke-width=".800"/></svg><span>透明视频</span></div></div>
          <div class="h-[19px] border-b border-[#2a2a2a]"><div class="flex h-[18px] w-[218px] items-center gap-1.5 bg-[#e283e2] pb-1 pl-2"><svg class="h-2 w-2.5" viewBox="0 0 10 8"><path d="M0 0h9v8H0z" fill="#a68ad8"/><path d="M3 6.500l1-4.500h1M2.500 4h2M5 6.500l2.500-3M5 3.500l2 3" stroke="#3d2f90" fill="none"/></svg><span class="text-[7px]">MEDIATEA</span></div></div>
          <div class="h-[19px] border-b border-[#2a2a2a]"><div class="flex h-[18px] w-[218px] items-center gap-1.5 bg-[#e283e2] pb-1 pl-2"><svg class="h-2 w-2.5" viewBox="0 0 10 8"><path d="M0 0h9v8H0z" fill="#a68ad8"/><path d="M3 6.500l1-4.500h1M2.500 4h2M5 6.500l2.500-3M5 3.500l2 3" stroke="#3d2f90" fill="none"/></svg><span>进度条外部</span></div></div>
          <div class="h-[19px] border-b border-[#2a2a2a]"><div class="flex h-[18px] w-[218px] items-center gap-1.5 bg-[#e283e2] pb-1 pl-2"><svg class="h-2 w-2.5" viewBox="0 0 10 8"><path d="M0 0h9v8H0z" fill="#a68ad8"/><path d="M3 6.500l1-4.500h1M2.500 4h2M5 6.500l2.500-3M5 3.500l2 3" stroke="#3d2f90" fill="none"/></svg><span>进度条内部</span></div></div>
          <div class="flex h-[19px] w-[218px] items-center gap-1.5 bg-[#e283e2] pb-1 pl-2"><svg class="h-2 w-2.5" viewBox="0 0 10 8"><path d="M0 0h9v8H0z" fill="#a68ad8"/><path d="M3 6.500l1-4.500h1M2.500 4h2M5 6.500l2.500-3M5 3.500l2 3" stroke="#3d2f90" fill="none"/></svg><span>背景</span></div>
        </div>
        <div class="h-[3px] bg-[#2e2e2e]"></div>
        <div class="h-8 bg-[#1f1f1f]"></div>
        <div class="mt-px h-[7px] bg-[#1f1f1f]"></div>
        <div class="absolute bottom-2 left-[59px] top-[50px] w-px bg-[#4a80c4]"></div>
        <svg class="absolute left-[54px] top-11 h-2.5 w-2.5"><use href="#i-head"/></svg>
      </div>

      <!-- Vertical zoom bars -->
      <div class="pt-[70px]">
        <div class="flex h-[125px] w-2 flex-col justify-between rounded bg-[#2e2e2e]"><svg class="h-2 w-2"><use href="#i-knob"/></svg><svg class="h-2 w-2"><use href="#i-knob"/></svg></div>
        <div class="mt-[5px] flex h-[27px] w-2 flex-col justify-between rounded bg-[#2e2e2e]"><svg class="h-2 w-2"><use href="#i-knob"/></svg><svg class="h-2 w-2"><use href="#i-knob"/></svg></div>
      </div>
    </div>
  </section>

  <!-- Audio meters -->
  <section class="flex w-[38px] shrink-0 flex-col bg-[#232323] pl-2 pt-5">
    <div class="flex h-[203px] w-[19px] gap-px border border-[#111] border-b-[#b5a828] bg-[#111] pb-px"><span class="flex-1 border-t-[6px] border-[#1d1d1d] bg-[#262626]"></span><span class="flex-1 border-t-[6px] border-[#1d1d1d] bg-[#262626]"></span></div>
    <div class="mt-[3px] flex gap-1 pl-0.5 text-[8px] text-[#9a9a9a]"><button>S</button><button>S</button></div>
  </section>
  </div>
 </div>

 <!-- Essential graphics -->
 <section class="flex w-[232px] shrink-0 flex-col bg-[#232323]">
  <div class="flex h-7 items-start pl-2 pt-1.5">
    <button class="w-[83px] whitespace-nowrap text-left">Lumetri 颜色</button>
    <button class="flex h-[22px] items-start gap-2.5 border-b border-[#b0b0b0] pb-1 text-[#b0b0b0]">基本图形 <svg class="mt-1 h-2 w-2"><use href="#i-menu"/></svg></button>
  </div>
  <div class="mt-2 flex h-[18px] gap-[18px] pl-2.5"><button class="h-[17px]">浏览</button><button class="border-b border-[#b0b0b0] pb-px text-[#b0b0b0]">编辑</button></div>
  <div class="ml-[3px] mr-3 mt-[9px] h-[17px] bg-[#1d1d1d]"></div>
  <div class="mr-[18px] mt-0.5 flex h-2.5 items-center justify-end gap-2.5">
    <button aria-label="新建组" class="text-[#484848]"><svg class="h-2 w-2.5" viewBox="0 0 10 8"><path d="M0 0h4l1 1h5v7H0z" fill="currentColor"/></svg></button>
    <button aria-label="新建图层" class="text-[#b8b8b8]"><svg class="h-2 w-2" viewBox="0 0 8 8"><path d="M0 0h8v8H4V4H0z" fill="currentColor"/><path d="M0 4h4v4z" fill="#777"/></svg></button>
  </div>
  <div class="mb-[15px] ml-[30px] mt-auto flex items-center gap-1 text-[28px] leading-8 text-[#eaeaea]">
    <svg class="h-9 w-10" viewBox="0 0 40 36" aria-hidden="true"><path d="M14 1C6 1 1 6 1 12.500c0 4 2 7 5 9L4.500 26l5.500-3c2 .600 4 .700 6 .500C15 15 21 11 28 11 26.500 5 21 1 14 1z" fill="#e2e2e2"/><path d="M28 12c-7 0-12 4.500-12 10.500S21 32.500 28 32.500c1.500 0 3-.200 4.300-.700L36.500 34l-1-3.500c2.500-2 4-4.700 4-8C39.500 16.500 35 12 28 12z" fill="#e2e2e2"/><g fill="#232323"><circle cx="9.500" cy="9" r="1.700"/><circle cx="19" cy="9" r="1.700"/><circle cx="24" cy="19" r="1.500"/><circle cx="32" cy="19" r="1.500"/></g></svg>
    <span>MediaTea</span>
  </div>
 </section>
</main>

<!-- Status bar -->
<footer class="mt-px flex h-[15px] items-center rounded-b border-t border-[#111] bg-[#232323] pl-1">
  <svg class="h-2.5 w-3" viewBox="0 0 12 10"><rect x="0" y="0" width="12" height="10" rx="5" fill="#9a9a9a"/><path d="M6.500 3.500a2 2 0 1 0 0 3L8 4.500a1.200 1.200 0 1 1 .500 2" fill="none" stroke="#232323"/></svg>
</footer>
</body>
</html>
